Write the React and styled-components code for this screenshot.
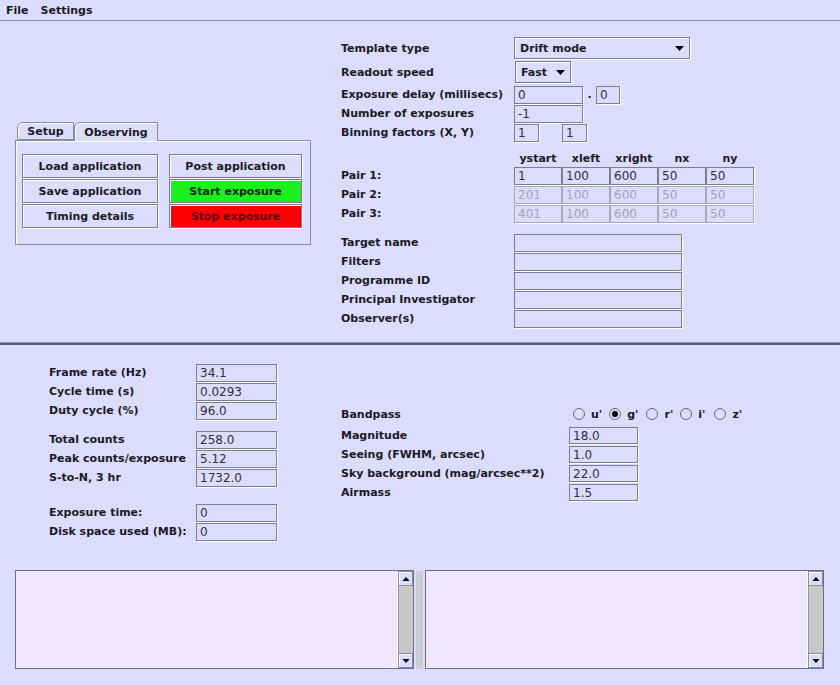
import styled, { createGlobalStyle } from "styled-components"

const BG = "#dcdcfc"
const PANE = "#efe7fe"

const Global = createGlobalStyle`
  html, body { margin: 0; padding: 0; background: ${BG}; }
  body { font-family: "DejaVu Sans", "Liberation Sans", sans-serif; }
`

const Frame = styled.div`
  width: 840px;
  height: 685px;
  background: ${BG};
  color: #1a1a24;
  font-family: "DejaVu Sans", "Liberation Sans", sans-serif;
  font-size: 11px;
  font-weight: bold;
  display: flex;
  flex-direction: column;
  overflow: hidden;
`

const MenuBar = styled.div`
  height: 20px;
  border-bottom: 1px solid #8c8ca6;
  display: flex;
  align-items: center;
  padding-left: 6px;
  gap: 12px;
`

const Top = styled.div`
  display: flex;
  height: 321px;
`

const TopLeft = styled.div`
  width: 341px;
  flex: none;
  box-sizing: border-box;
  padding: 101px 0 0 15px;
`

const TabStrip = styled.div`
  display: flex;
  height: 18px;
  padding-left: 2px;
  position: relative;
  z-index: 1;
`

const Tab = styled.div`
  box-sizing: border-box;
  width: ${p => p.$w}px;
  height: ${p => (p.$active ? 19 : 18)}px;
  border: 1px solid #8a8aa4;
  border-bottom: ${p => (p.$active ? "none" : "1px solid #8a8aa4")};
  border-top-left-radius: 6px;
  box-shadow: inset 1px 1px 0 #fff;
  background: ${BG};
  display: flex;
  align-items: center;
  justify-content: center;
`

const TabPanel = styled.div`
  box-sizing: border-box;
  width: 296px;
  height: 105px;
  border: 1px solid #8a8aa4;
  box-shadow: inset 1px 1px 0 #fff;
  padding: 13px 7px 0 6px;
  display: grid;
  grid-template-columns: 136px 133px;
  grid-auto-rows: 24px;
  column-gap: 11px;
  row-gap: 1px;
  align-content: start;
`

const Button = styled.div`
  box-sizing: border-box;
  border: 1px solid #7a7a90;
  box-shadow: inset 1px 1px 0 #fff, 1px 1px 0 #fff;
  background: ${p => p.$fill || BG};
  color: ${p => p.$ink || "#1a1a24"};
  display: flex;
  align-items: center;
  justify-content: center;
`

const Form = styled.div`
  padding-top: 16px;
  display: flex;
  flex-direction: column;
`

const Row = styled.div`
  display: flex;
  align-items: center;
  height: ${p => p.$h || 19}px;
  margin-top: ${p => p.$mt || 0}px;
`

const Label = styled.div`
  width: ${p => p.$w}px;
  flex: none;
  white-space: nowrap;
`

const Field = styled.div`
  box-sizing: border-box;
  width: ${p => p.$w}px;
  height: ${p => p.$h || 18}px;
  border: 1px solid ${p => (p.$off ? "#a8a8bc" : "#7c7c92")};
  box-shadow: 1px 1px 0 #fff;
  padding-left: 3px;
  display: flex;
  align-items: center;
  font-size: 12px;
  font-weight: normal;
  color: ${p => (p.$off ? "#a4a4b4" : "#30303a")};
  flex: none;
`

const Combo = styled.div`
  box-sizing: border-box;
  width: ${p => p.$w}px;
  height: 22px;
  border: 1px solid #7a7a90;
  box-shadow: inset 1px 1px 0 #fff, 1px 1px 0 #fff;
  display: flex;
  align-items: center;
  justify-content: space-between;
  padding: 0 5px;
  flex: none;
`

const Dot = styled.div`
  width: 13px;
  text-align: center;
  flex: none;
`

const Gap = styled.div`
  width: ${p => p.$w}px;
  flex: none;
`

const HeadCell = styled.div`
  width: 48px;
  text-align: center;
  flex: none;
`

const Separator = styled.div`
  height: 2px;
  border-top: 1px solid #9494b4;
  background: #5c5c7a;
`

const Bottom = styled.div`
  display: flex;
  height: 225px;
`

const BottomLeft = styled.div`
  width: 341px;
  flex: none;
  box-sizing: border-box;
  padding: 18px 0 0 49px;
  display: flex;
  flex-direction: column;
`

const Group = styled.div`
  display: flex;
  flex-direction: column;
  margin-top: ${p => p.$mt || 0}px;
`

const BottomRight = styled.div`
  padding-top: 59px;
  display: flex;
  flex-direction: column;
`

const Radios = styled.div`
  display: flex;
  align-items: center;
`

const RadioItem = styled.div`
  display: flex;
  align-items: center;
  gap: 6px;
  margin-right: ${p => p.$mr}px;
`

const Circle = styled.div`
  box-sizing: border-box;
  width: 12px;
  height: 12px;
  border-radius: 50%;
  border: 1px solid #6a6a7e;
  background: ${BG};
  display: flex;
  align-items: center;
  justify-content: center;
  &::after {
    content: "";
    width: 6px;
    height: 6px;
    border-radius: 50%;
    background: ${p => (p.$on ? "#000" : "transparent")};
  }
`

const Panes = styled.div`
  display: flex;
  height: 99px;
  padding-left: 15px;
`

const Pane = styled.div`
  box-sizing: border-box;
  width: 399px;
  border: 1px solid #6e6e82;
  display: flex;
`

const PaneText = styled.div`
  flex: 1;
  background: ${PANE};
`

const ScrollBar = styled.div`
  width: 15px;
  border-left: 1px solid #fff;
  display: flex;
  flex-direction: column;
  background: #c8c8c8;
`

const Arrow = styled.div`
  box-sizing: border-box;
  height: 15px;
  background: ${BG};
  border: 1px solid #8a8aa0;
  box-shadow: inset 1px 1px 0 #fff;
  display: flex;
  align-items: center;
  justify-content: center;
`

const Track = styled.div`
  flex: 1;
  background: #c8c8c8;
  border-left: 1px solid #9a9a9a;
`

const Divider = styled.div`
  width: 11px;
  box-sizing: border-box;
  padding: 1px 2px 0;
  display: flex;
`

const Dots = styled.div`
  flex: 1;
  background-color: #e6e6ee;
  background-image: radial-gradient(circle, #8e8e9a 0.5px, transparent 0.8px);
  background-size: 2px 2px;
`

const Tri = ({ up, w = 9, h = 5 }) => (
  <svg width={w} height={h} viewBox="0 0 9 5">
    <polygon points={up ? "0,5 9,5 4.5,0" : "0,0 9,0 4.5,5"} fill="#000" />
  </svg>
)

const ScrollPane = () => (
  <Pane>
    <PaneText />
    <ScrollBar>
      <Arrow><Tri up w={8} h={4} /></Arrow>
      <Track />
      <Arrow><Tri w={8} h={4} /></Arrow>
    </ScrollBar>
  </Pane>
)

const pairs = [
  ["1", "100", "600", "50", "50"],
  ["201", "100", "600", "50", "50"],
  ["401", "100", "600", "50", "50"],
]

const info = ["Target name", "Filters", "Programme ID", "Principal Investigator", "Observer(s)"]

const timing = [
  [["Frame rate (Hz)", "34.1"], ["Cycle time (s)", "0.0293"], ["Duty cycle (%)", "96.0"]],
  [["Total counts", "258.0"], ["Peak counts/exposure", "5.12"], ["S-to-N, 3 hr", "1732.0"]],
  [["Exposure time:", "0"], ["Disk space used (MB):", "0"]],
]

const target = [
  ["Magnitude", "18.0"],
  ["Seeing (FWHM, arcsec)", "1.0"],
  ["Sky background (mag/arcsec**2)", "22.0"],
  ["Airmass", "1.5"],
]

const bands = [["u'", 7], ["g'", 8], ["r'", 7], ["i'", 9], ["z'", 0]]

export default function App() {
  return (
    <Frame>
      <Global />
      <MenuBar>
        <span>File</span>
        <span>Settings</span>
      </MenuBar>

      <Top>
        <TopLeft>
          <TabStrip>
            <Tab $w={57}>Setup</Tab>
            <Tab $w={84} $active>Observing</Tab>
          </TabStrip>
          <TabPanel>
            <Button>Load application</Button>
            <Button>Post application</Button>
            <Button>Save application</Button>
            <Button $fill="#1cf01c" $ink="#0a260a">Start exposure</Button>
            <Button>Timing details</Button>
            <Button $fill="#ff0000" $ink="#5a0000">Stop exposure</Button>
          </TabPanel>
        </TopLeft>

        <Form>
          <Row $h={22}>
            <Label $w={173}>Template type</Label>
            <Combo $w={176}>Drift mode<Tri /></Combo>
          </Row>
          <Row $h={22} $mt={2}>
            <Label $w={174}>Readout speed</Label>
            <Combo $w={56}>Fast<Tri /></Combo>
          </Row>
          <Row $mt={2}>
            <Label $w={173}>Exposure delay (millisecs)</Label>
            <Field $w={69}>0</Field>
            <Dot>.</Dot>
            <Field $w={24}>0</Field>
          </Row>
          <Row>
            <Label $w={173}>Number of exposures</Label>
            <Field $w={69}>-1</Field>
          </Row>
          <Row>
            <Label $w={173}>Binning factors (X, Y)</Label>
            <Field $w={25}>1</Field>
            <Gap $w={23} />
            <Field $w={25}>1</Field>
          </Row>
          <Row $h={16} $mt={8}>
            <Label $w={173} />
            {["ystart", "xleft", "xright", "nx", "ny"].map(h => (
              <HeadCell key={h}>{h}</HeadCell>
            ))}
          </Row>
          {pairs.map((p, i) => (
            <Row key={i}>
              <Label $w={173}>Pair {i + 1}:</Label>
              {p.map((v, j) => (
                <Field key={j} $w={48} $off={i > 0}>{v}</Field>
              ))}
            </Row>
          ))}
          {info.map((t, i) => (
            <Row key={t} $mt={i === 0 ? 10 : 0}>
              <Label $w={173}>{t}</Label>
              <Field $w={168} />
            </Row>
          ))}
        </Form>
      </Top>

      <Separator />

      <Bottom>
        <BottomLeft>
          {timing.map((g, gi) => (
            <Group key={gi} $mt={gi === 0 ? 0 : gi === 1 ? 10 : 16}>
              {g.map(([l, v]) => (
                <Row key={l}>
                  <Label $w={147}>{l}</Label>
                  <Field $w={81} $h={18}>{v}</Field>
                </Row>
              ))}
            </Group>
          ))}
        </BottomLeft>

        <BottomRight>
          <Row $h={20}>
            <Label $w={232}>Bandpass</Label>
            <Radios>
              {bands.map(([b, mr]) => (
                <RadioItem key={b} $mr={mr}>
                  <Circle $on={b === "g'"} />
                  {b}
                </RadioItem>
              ))}
            </Radios>
          </Row>
          <Group $mt={2}>
            {target.map(([l, v]) => (
              <Row key={l}>
                <Label $w={228}>{l}</Label>
                <Field $w={69} $h={17}>{v}</Field>
              </Row>
            ))}
          </Group>
        </BottomRight>
      </Bottom>

      <Panes>
        <ScrollPane />
        <Divider><Dots /></Divider>
        <ScrollPane />
      </Panes>
    </Frame>
  )
}
